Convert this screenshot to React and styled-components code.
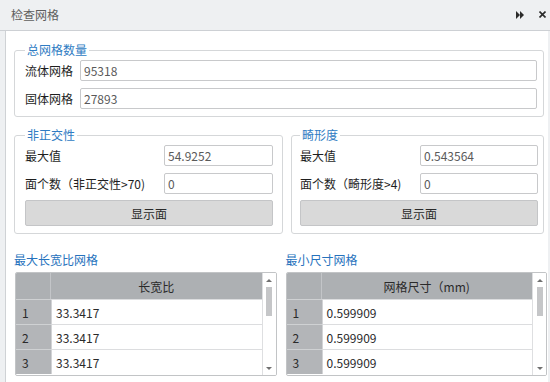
import React from "react";
import styled, { createGlobalStyle } from "styled-components";

const GlobalStyle = createGlobalStyle`
  html, body { margin: 0; padding: 0; }
  body {
    width: 550px;
    height: 382px;
    overflow: hidden;
    background: #eef0f2;
    font-family: "Noto Sans CJK SC", "Noto Sans", sans-serif;
    font-size: 12px;
    color: #222;
  }
  * { box-sizing: border-box; }
`;

const Window = styled.div`
  width: 550px;
  height: 382px;
  display: flex;
  flex-direction: column;
  background: #eef0f2;
`;

const TitleBar = styled.div`
  height: 31px;
  flex: none;
  display: flex;
  align-items: center;
  justify-content: space-between;
  padding: 0 4px 1px 11px;
  border-bottom: 1px solid #cdd0d4;
`;

const Title = styled.span`
  color: #5e5e5e;
  font-size: 12px;
  line-height: 14px;
`;

const Tools = styled.div`
  display: flex;
  align-items: center;
  gap: 15px;
`;

const Panel = styled.div`
  flex: 1;
  margin: 0 2px 0 5px;
  background: #ffffff;
  border-left: 1px solid #cfd2d5;
  padding: 12px 1px 0 8px;
  display: flex;
  flex-direction: column;
  min-height: 0;
`;

const Group = styled.fieldset`
  margin: 0;
  min-width: 0;
  border: 1px solid #d5d7d9;
  border-radius: 3px;
  padding: 3px ${(p) => p.$pr}px 7px ${(p) => p.$pl}px;
  display: flex;
  flex-direction: column;
  gap: 7px;
`;

const Legend = styled.legend`
  padding: 0 2px;
  margin-left: 0;
  color: #2f7cc3;
  font-size: 12px;
  line-height: 14px;
`;

const TopGroupWrap = styled.div`
  margin-right: 3px;
`;

const SplitRow = styled.div`
  margin-top: 11px;
  margin-right: 3px;
  display: grid;
  grid-template-columns: 269px 253px;
  gap: 8px;
`;

const FieldRow = styled.div`
  display: grid;
  grid-template-columns: ${(p) => p.$labelW}px 1fr;
  align-items: center;
`;

const Label = styled.span`
  color: #1e1e1e;
  font-size: 12px;
  line-height: 14px;
  white-space: nowrap;
`;

const Input = styled.input`
  height: 21px;
  width: 100%;
  border: 1px solid #c8c9cb;
  border-radius: 2px;
  padding: 0 3px;
  font: inherit;
  font-size: 12px;
  color: #5a5a5a;
  background: #fff;
  outline: none;
`;

const Button = styled.button`
  height: 26px;
  margin-top: -1px;
  border: 1px solid #c4c5c7;
  border-radius: 2px;
  background: #d9d9d9;
  font: inherit;
  font-size: 12px;
  color: #2a2a2a;
  padding: 0;
`;

const TablesRow = styled.div`
  margin-top: 19px;
  padding-left: 1px;
  display: grid;
  grid-template-columns: 1fr 1fr;
  gap: 9px;
`;

const TableBlock = styled.div`
  display: flex;
  flex-direction: column;
  gap: 5px;
`;

const Caption = styled.div`
  color: #2672bd;
  font-size: 12px;
  line-height: 14px;
  margin-left: ${(p) => p.$ml || 0}px;
`;

const TableBox = styled.div`
  display: flex;
  height: 104px;
  border: 1px solid #c2c4c6;
  border-radius: 2px;
  overflow: hidden;
`;

const Grid = styled.div`
  flex: 1;
  display: grid;
  grid-template-columns: 35px 1fr;
  grid-template-rows: 26px repeat(3, 25px);
  align-content: start;
`;

const HeadCell = styled.div`
  background: #adb0b3;
  color: #2a2a2a;
  display: flex;
  align-items: center;
  justify-content: center;
  border-right: ${(p) => (p.$corner ? "1px solid #c3c5c8" : "none")};
`;

const NumCell = styled.div`
  background: #b3b5b8;
  color: #2a2a2a;
  display: flex;
  align-items: center;
  padding-left: 6px;
  border-top: 1px solid #cfd1d3;
`;

const DataCell = styled.div`
  background: #fff;
  color: #2a2a2a;
  display: flex;
  align-items: center;
  padding-left: 4px;
  border-top: 1px solid #dcdddf;
  border-left: 1px solid #d2d3d5;
`;

const ScrollBar = styled.div`
  width: 14px;
  flex: none;
  border-left: 1px solid #dedfe1;
  background: #fff;
  display: flex;
  flex-direction: column;
  align-items: center;
  padding: 6px 0 5px;
`;

const Arrow = styled.div`
  width: 0;
  height: 0;
  border-left: 3px solid transparent;
  border-right: 3px solid transparent;
  ${(p) =>
    p.$down
      ? "border-top: 3px solid #707070;"
      : "border-bottom: 3px solid #707070;"}
`;

const Thumb = styled.div`
  width: 6px;
  height: 29px;
  margin-top: 5px;
  background: #c5c6c8;
`;

const Spacer = styled.div`
  flex: 1;
`;

function DataTable({ header, values }) {
  return (
    <TableBox>
      <Grid>
        <HeadCell $corner />
        <HeadCell>{header}</HeadCell>
        {values.map((v, i) => (
          <React.Fragment key={i}>
            <NumCell>{i + 1}</NumCell>
            <DataCell>{v}</DataCell>
          </React.Fragment>
        ))}
      </Grid>
      <ScrollBar>
        <Arrow />
        <Thumb />
        <Spacer />
        <Arrow $down />
      </ScrollBar>
    </TableBox>
  );
}

export default function App() {
  return (
    <Window>
      <GlobalStyle />
      <TitleBar>
        <Title>检查网格</Title>
        <Tools>
          <svg width="8" height="8" viewBox="0 0 8 8">
            <polygon points="0,0 4,4 0,8" fill="#2b2b2b" />
            <polygon points="4,0 8,4 4,8" fill="#2b2b2b" />
          </svg>
          <svg width="7" height="7" viewBox="0 0 7 7">
            <path d="M0.5 0.5 L6.5 6.5 M6.5 0.5 L0.5 6.5" stroke="#2b2b2b" strokeWidth="1.6" />
          </svg>
        </Tools>
      </TitleBar>
      <Panel>
        <TopGroupWrap>
          <Group $pl={10} $pr={6}>
            <Legend>总网格数量</Legend>
            <FieldRow $labelW={55}>
              <Label>流体网格</Label>
              <Input readOnly value="95318" />
            </FieldRow>
            <FieldRow $labelW={55}>
              <Label>固体网格</Label>
              <Input readOnly value="27893" />
            </FieldRow>
          </Group>
        </TopGroupWrap>
        <SplitRow>
          <Group $pl={10} $pr={9}>
            <Legend>非正交性</Legend>
            <FieldRow $labelW={139}>
              <Label>最大值</Label>
              <Input readOnly value="54.9252" />
            </FieldRow>
            <FieldRow $labelW={139}>
              <Label>面个数（非正交性&gt;70)</Label>
              <Input readOnly value="0" />
            </FieldRow>
            <Button>显示面</Button>
          </Group>
          <Group $pl={8} $pr={5}>
            <Legend>畸形度</Legend>
            <FieldRow $labelW={120}>
              <Label>最大值</Label>
              <Input readOnly value="0.543564" />
            </FieldRow>
            <FieldRow $labelW={120}>
              <Label>面个数（畸形度&gt;4)</Label>
              <Input readOnly value="0" />
            </FieldRow>
            <Button>显示面</Button>
          </Group>
        </SplitRow>
        <TablesRow>
          <TableBlock>
            <Caption $ml={-1}>最大长宽比网格</Caption>
            <DataTable header="长宽比" values={["33.3417", "33.3417", "33.3417"]} />
          </TableBlock>
          <TableBlock>
            <Caption>最小尺寸网格</Caption>
            <DataTable
              header="网格尺寸（mm)"
              values={["0.599909", "0.599909", "0.599909"]}
            />
          </TableBlock>
        </TablesRow>
      </Panel>
    </Window>
  );
}
